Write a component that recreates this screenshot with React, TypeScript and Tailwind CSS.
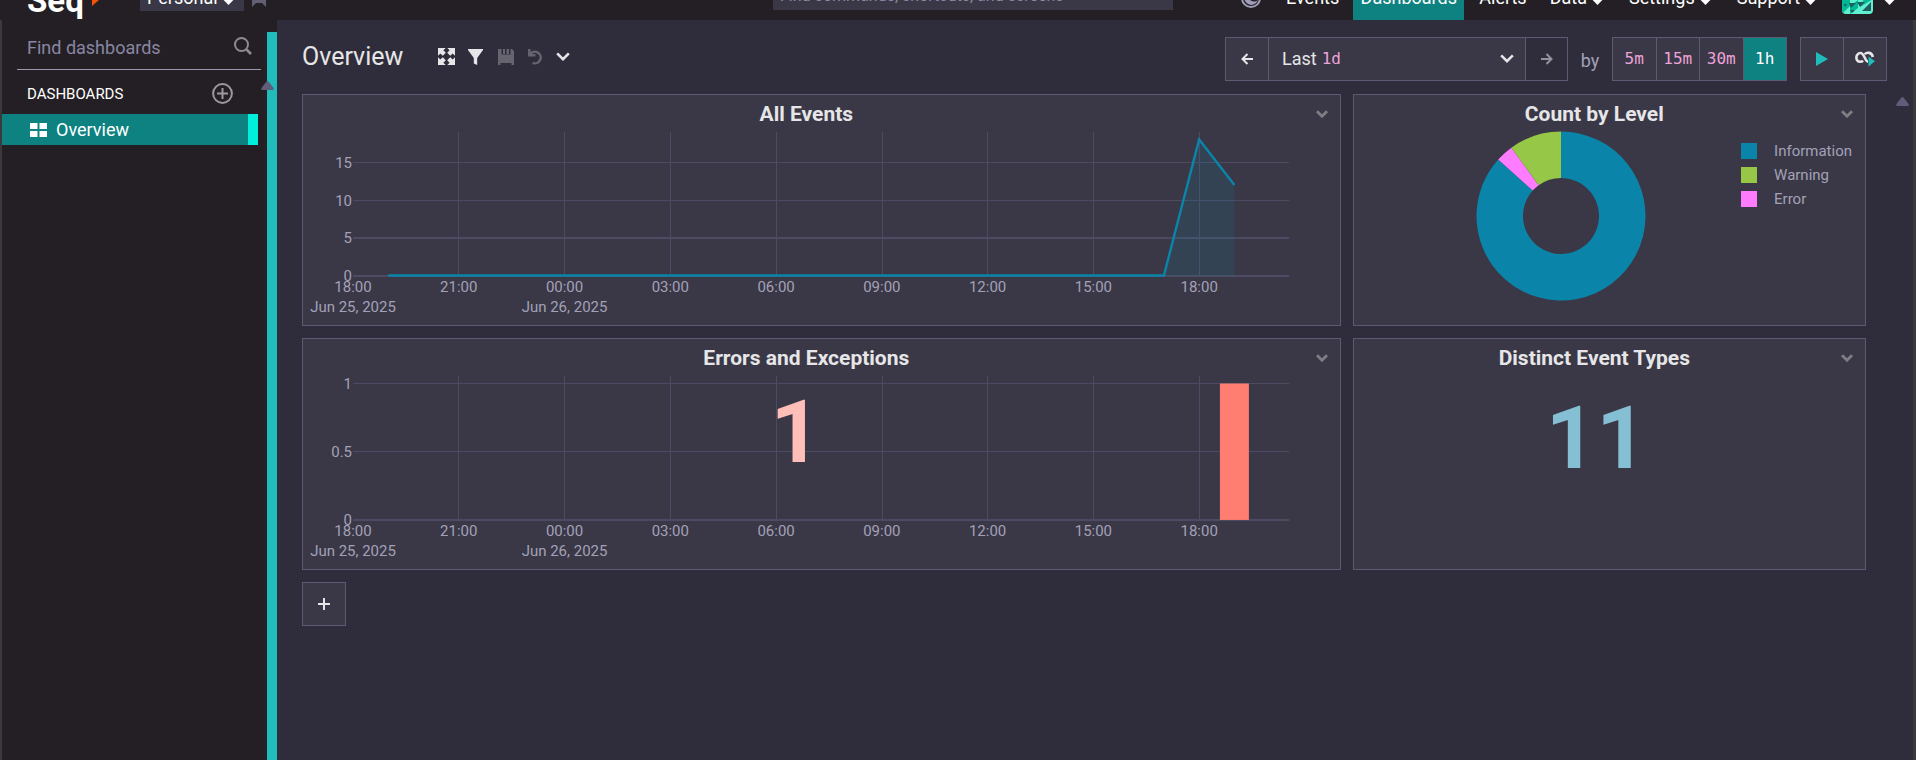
import type { ReactNode } from "react";

const HOURS = ["18:00", "21:00", "00:00", "03:00", "06:00", "09:00", "12:00", "15:00", "18:00"];
const DATES = ["Jun 25, 2025", "", "Jun 26, 2025"];
const PLOT_LEFT = 50;
const PLOT_RIGHT = 986;
const HOUR_WIDTH = 35.27;
const hourX = (hours: number) => PLOT_LEFT + hours * HOUR_WIDTH;

function Chevron({ className, width = 11, stroke = 2.4 }: { className?: string; width?: number; stroke?: number }) {
  return (
    <svg className={className} width={width} height={(width * 8) / 12} viewBox="0 0 12 8" fill="none" stroke="currentColor" strokeWidth={stroke} aria-hidden="true">
      <path d="M1 1.2 6 6.2 11 1.2" />
    </svg>
  );
}

function ScrollArrow() {
  return (
    <svg width="13" height="9" viewBox="0 0 13 9" fill="#5f5d78" aria-hidden="true">
      <path d="M5.3.8Q6.5-.6 7.7.8L12.6 7Q13.2 9 11.6 9H1.4Q-.2 9 .4 7Z" />
    </svg>
  );
}

function Arrow({ back }: { back?: boolean }) {
  return (
    <svg width="12" height="12" viewBox="0 0 12 12" fill="none" stroke="currentColor" strokeWidth="2" aria-hidden="true">
      {back ? <path d="M12 6H1.5M6.5 1 1.5 6 6.5 11" /> : <path d="M0 6H10.5M5.5 1 10.5 6 5.5 11" />}
    </svg>
  );
}

function MenuChevron() {
  return <Chevron className="mt-[6px]" width={11} stroke={3.4} />;
}

function Header() {
  const item = "flex h-full items-center gap-[5px] text-[18px] leading-6";
  return (
    <header className="flex h-5 items-end overflow-hidden bg-[#241f24]">
      <div className="flex h-11 w-full items-center">
        <div className="flex h-full min-w-0 flex-1 items-center pl-[27px]">
          <a href="#home" className="flex w-[113px] items-center gap-2 pt-[6px] text-[33px] leading-8 font-bold text-white">
            Seq
            <svg width="7" height="16" viewBox="0 0 7 16" fill="#f4510b" aria-hidden="true"><path d="M0 0H7V7L0 13Z" /></svg>
          </a>
          <button type="button" aria-haspopup="menu" className="flex h-[26px] w-[104px] items-center justify-between bg-[#3a3846] pr-[10px] pl-[7px] text-[18px] leading-6 text-white">
            Personal
            <MenuChevron />
          </button>
          <button type="button" aria-label="Bookmarks" className="ml-2">
            <svg width="14" height="17" viewBox="0 0 14 17" fill="#625f72"><path d="M0 0H14V17L10 13H4L0 17Z" /></svg>
          </button>
        </div>
        <div className="mb-[10px] flex h-7 w-[400px] items-center self-end bg-[#3a3846] pr-[9px] pl-[7px]">
          <input aria-label="Find commands, shortcuts, and screens" placeholder="Find commands, shortcuts, and screens" className="h-6 min-w-0 flex-1 bg-transparent text-[16px] leading-6 outline-none placeholder:text-[#8c8aa8]" />
          <kbd className="font-['DejaVu_Sans_Mono',monospace] text-[13px] leading-6 text-[#e88a6f]">Ctrl K</kbd>
        </div>
        <nav className="flex h-full w-[743px] shrink-0 items-center pl-[68px] text-white">
          <button type="button" aria-label="Theme" className="mr-[25px] text-[#a09db8]">
            <svg width="20" height="20" viewBox="0 0 20 20" fill="none">
              <circle cx="10" cy="10" r="9" stroke="currentColor" strokeWidth="2" />
              <path d="M9 3A7 7 0 1 0 17 12 6 6 0 0 1 9 3Z" fill="currentColor" />
            </svg>
          </button>
          <a href="#events" className={item}>Events</a>
          <a href="#dashboards" aria-current="page" className="ml-[14px] flex h-full w-[111px] items-center justify-center bg-[#0e8280] text-[18px] leading-6">Dashboards</a>
          <a href="#alerts" className={item + " ml-[15px]"}>Alerts</a>
          <button type="button" className={item + " ml-[23px]"}>Data<MenuChevron /></button>
          <button type="button" className={item + " ml-[26px]"}>Settings<MenuChevron /></button>
          <button type="button" className={item + " ml-[26px]"}>Support<MenuChevron /></button>
          <button type="button" aria-label="Account" className="ml-[26px] flex items-center gap-[11px]">
            <svg className="rounded-sm" width="31" height="32" viewBox="0 0 31 32">
              <rect width="31" height="32" fill="#5ff0d0" />
              <path d="M0 17H8V24L0 32ZM8 24 16 18V26L8 32ZM22 17H31L18 25Z" fill="#00b894" />
              <path d="M7 21H14L9 26ZM15 20H23L18 25ZM20 29 29 20V29ZM8 28H13L10 31ZM2 22H5L3 25Z" fill="#215c61" />
            </svg>
            <MenuChevron />
          </button>
        </nav>
      </div>
    </header>
  );
}

function Sidebar() {
  return (
    <aside className="relative w-[267px] shrink-0 border-l-2 border-[#3a3a3a] bg-[#241f24] pt-[6px]">
      <form className="mr-[6px] ml-[15px] flex h-11 items-center border-b border-[#9a98ad] pr-[9px] pl-[10px]">
        <input aria-label="Find dashboards" placeholder="Find dashboards" className="min-w-0 flex-1 bg-transparent text-[18px] leading-6 text-white outline-none placeholder:text-[#8886a3]" />
        <button type="submit" aria-label="Search" className="pb-1">
          <svg width="18" height="18" viewBox="0 0 18 18" fill="none" stroke="#8d8b90" strokeWidth="2"><circle cx="7.5" cy="7.5" r="6.5" /><path d="M12.5 12.5 17 17" strokeWidth="2.6" /></svg>
        </button>
      </form>
      <div className="flex h-11 items-center justify-between pt-[3px] pr-[34px] pl-[25px]">
        <h2 className="text-[15px] leading-6 text-white">DASHBOARDS</h2>
        <button type="button" aria-label="New dashboard">
          <svg width="21" height="21" viewBox="0 0 21 21" fill="none" stroke="#9b999e" strokeWidth="2"><circle cx="10.5" cy="10.5" r="9.4" /><path d="M10.5 5V16M5 10.5H16" /></svg>
        </button>
      </div>
      <a href="#overview" aria-current="page" className="mr-[9px] flex h-[31px] items-center gap-[9px] border-r-10 border-[#00efdd] bg-[#0e8280] pl-7 text-[18px] leading-6 text-white">
        <svg width="17" height="14" viewBox="0 0 17 14" fill="#fff" aria-hidden="true"><path d="M0 0H7.5V6H0ZM9.5 0H17V6H9.5ZM0 8H7.5V14H0ZM9.5 8H17V14H9.5Z" /></svg>
        Overview
      </a>
      <div className="absolute top-[61px] -right-[7px] z-10"><ScrollArrow /></div>
    </aside>
  );
}

function Toolbar() {
  const cell = "flex-1 border-r border-[#5c5a75] last:border-r-0";
  return (
    <div className="flex min-h-11 flex-wrap items-center pr-[26px] pl-[25px]">
      <div className="flex items-center pb-[5px] text-[#e6e6e8]">
        <h1 className="mr-[35px] text-[25px] leading-8">Overview</h1>
        <button type="button" aria-label="Full screen" className="mr-[13px]">
          <svg width="17" height="17" viewBox="0 0 17 17" fill="currentColor">
            <path d="M0 0H7.7L5.4 2.3 7.8 4.8 4.8 7.8 2.3 5.4 0 7.7ZM17 0V7.7L14.7 5.4 12.2 7.8 9.2 4.8 11.6 2.3 9.3 0ZM0 17V9.3L2.3 11.6 4.8 9.2 7.8 12.2 5.4 14.7 7.7 17ZM17 17H9.3L11.6 14.7 9.2 12.2 12.2 9.2 14.7 11.6 17 9.3Z" />
          </svg>
        </button>
        <button type="button" aria-label="Filter" className="mr-[15px]">
          <svg width="15" height="16" viewBox="0 0 15 16" fill="currentColor"><path d="M0 0H15V1L9.2 9V16L5.8 14.5V9L0 1Z" /></svg>
        </button>
        <button type="button" aria-label="Save" disabled className="mr-[14px] text-[#66646f]">
          <svg width="16" height="16" viewBox="0 0 16 16" fill="currentColor"><path d="M0 0H3.5V6.5H12.5V0H14L16 2V16H13.5V13.5H2.5V16H0ZM5 0H7V5H5ZM8.5 0H11V5H8.5ZM0 5.5H16V14H0Z" /></svg>
        </button>
        <button type="button" aria-label="Undo" disabled className="mr-[13px] text-[#66646f]">
          <svg width="15" height="16" viewBox="0 0 15 16" fill="none" stroke="currentColor" strokeWidth="2.5"><path d="M1.3 0V6.2H7.5M1.8 5.6A5.8 5.8 0 1 1 4.6 13.8" /></svg>
        </button>
        <button type="button" aria-label="More"><Chevron width={14} stroke={2.2} /></button>
      </div>
      <div className="ml-auto flex h-11 items-center">
        <div className="flex h-11 w-[343px] border border-[#5c5a75] bg-[#3a3846] text-[#e6e6e8]">
          <button type="button" aria-label="Previous" className="flex w-[43px] items-center justify-center border-r border-[#5c5a75]"><Arrow back /></button>
          <div className="relative flex min-w-0 flex-1 items-center pl-[13px] text-[18px] leading-6">
            <label htmlFor="range">Last</label>
            <select id="range" className="h-full min-w-0 flex-1 appearance-none bg-transparent pl-[5px] font-['DejaVu_Sans_Mono',monospace] text-[16px] text-[#eda3d8] outline-none">
              <option>1d</option>
            </select>
            <Chevron className="pointer-events-none absolute right-[11px]" width={14} stroke={2.2} />
          </div>
          <button type="button" aria-label="Next" disabled className="flex w-[42px] items-center justify-center border-l border-[#5c5a75] bg-[#2f2d3b] text-[#94929c]"><Arrow /></button>
        </div>
        <span className="w-[44px] pt-1 text-center text-[18px] leading-6 text-[#a3a1b8]">by</span>
        <div className="flex h-11 w-[175px] border border-[#5c5a75] bg-[#3a3846] font-['DejaVu_Sans_Mono',monospace] text-[16px] text-[#eda3d8]">
          <button type="button" className={cell}>5m</button>
          <button type="button" className={cell}>15m</button>
          <button type="button" className={cell}>30m</button>
          <button type="button" aria-pressed="true" className="flex-1 bg-[#0e8280] text-white">1h</button>
        </div>
        <div className="ml-[13px] flex h-11 w-[87px] border border-[#5c5a75] bg-[#3a3846]">
          <button type="button" aria-label="Refresh" className="flex flex-1 items-center justify-center border-r border-[#5c5a75]">
            <svg width="12" height="14" viewBox="0 0 12 14" fill="#20bcbb"><path d="M0 0 12 7 0 14Z" /></svg>
          </button>
          <button type="button" aria-label="Auto refresh" className="flex flex-1 items-center justify-center">
            <svg width="20" height="16" viewBox="0 0 20 16" fill="none">
              <path d="M8 9.6C6.8 11 3.2 11.4 1.9 8.8.4 5.4 2.6 2 5.4 2 9.6 2 9.8 10.6 13 10.6M9.8 3.2C11.4 1.2 17 .8 17.8 6" stroke="#e6e6e8" strokeWidth="2.6" />
              <path d="M13.5 5.5 20 10.3 13.5 15.5Z" fill="#20bcbb" />
            </svg>
          </button>
        </div>
      </div>
    </div>
  );
}

function Card({ title, className = "", children }: { title: string; className?: string; children: ReactNode }) {
  return (
    <section className={"flex flex-col border border-[#5c5a75] bg-[#3a3846] " + className}>
      <div className="flex h-9 items-center pt-[2px] pr-3">
        <h2 className="flex-1 text-center text-[21px] leading-6 font-bold text-[#e6e6e8]">{title}</h2>
        <button type="button" aria-label={title + " menu"} className="flex w-[18px] justify-end text-[#807e84]"><Chevron width={12} stroke={2.8} /></button>
      </div>
      {children}
    </section>
  );
}

type Tick = { label: string; y: number; thick?: boolean };

function TimeChart({ label, ticks, children }: { label: string; ticks: Tick[]; children: ReactNode }) {
  const base = ticks[ticks.length - 1].y;
  return (
    <svg role="img" aria-label={label} viewBox="0 0 1037 194" className="h-auto w-full" fontSize="15" fill="#a3a1b8">
      {ticks.map((t) => (
        <g key={t.label}>
          <rect x={PLOT_LEFT} y={t.y} width={PLOT_RIGHT - PLOT_LEFT} height={t.thick ? 2 : 1} fill="#4d4b63" shapeRendering="crispEdges" />
          <text x={PLOT_LEFT - 1} y={t.y + 6} textAnchor="end">{t.label}</text>
        </g>
      ))}
      {HOURS.map((h, i) => (
        <g key={i}>
          {i > 0 && <rect x={Math.floor(hourX(i * 3))} y="1" width={1} height={base - 1} fill="#4d4b63" shapeRendering="crispEdges" />}
          <text x={hourX(i * 3)} y={base + 17} textAnchor="middle">{h}</text>
          {DATES[i] && <text x={hourX(i * 3)} y={base + 37} textAnchor="middle">{DATES[i]}</text>}
        </g>
      ))}
      {children}
    </svg>
  );
}

const LEVELS = [
  { name: "Information", count: 26, color: "#0b84aa" },
  { name: "Error", count: 1, color: "#ff7cff" },
  { name: "Warning", count: 3, color: "#97c746" },
];
const LEGEND = [LEVELS[0], LEVELS[2], LEVELS[1]];

function Donut() {
  const outer = 84.5;
  const inner = 38;
  const total = 30;
  const point = (r: number, n: number) => {
    const a = (n / total) * 2 * Math.PI;
    return `${85 + r * Math.sin(a)} ${85 - r * Math.cos(a)}`;
  };
  let start = 0;
  return (
    <svg role="img" aria-label="Count by Level" width="170" height="170" viewBox="0 0 170 170">
      {LEVELS.map((l) => {
        const from = start;
        const to = (start += l.count);
        const large = l.count > total / 2 ? 1 : 0;
        return <path key={l.name} fill={l.color} d={`M${point(outer, from)}A${outer} ${outer} 0 ${large} 1 ${point(outer, to)}L${point(inner, to)}A${inner} ${inner} 0 ${large} 0 ${point(inner, from)}Z`} />;
      })}
    </svg>
  );
}

export default function App() {
  return (
    <div className="flex min-h-screen flex-col bg-[#241f24] font-['Roboto',sans-serif]">
      <Header />
      <div className="flex flex-1">
        <Sidebar />
        <div className="mt-3 w-[10px] shrink-0 bg-[#20bcbb]" />
        <main className="flex min-w-0 flex-1 flex-col border-r-3 border-[#3a3a3a] bg-[#2f2d3b] pt-[17px]">
          <Toolbar />
          <div className="mt-[13px] flex items-start pr-[4px] pl-[25px]">
            <div className="grid min-w-0 flex-1 grid-cols-12 gap-3">
              <Card title="All Events" className="col-span-8">
                <TimeChart label="All Events" ticks={[{ label: "15", y: 31 }, { label: "10", y: 69 }, { label: "5", y: 106, thick: true }, { label: "0", y: 144, thick: true }]}>
                  <path d={`M${hourX(23)} 145 L${hourX(24)} 8.5 L${hourX(25)} 54 V145Z`} fill="#0b84aa" fillOpacity="0.15" />
                  <path d={`M${hourX(1)} 144.5 H${hourX(23)} L${hourX(24)} 8.5 L${hourX(25)} 54`} fill="none" stroke="#0b84aa" strokeWidth="2.4" />
                </TimeChart>
              </Card>
              <Card title="Count by Level" className="col-span-4">
                <div className="flex flex-1 justify-between pr-[13px]">
                  <div className="flex flex-1 justify-center pl-[27px]"><Donut /></div>
                  <ul className="pt-2 text-[15px] leading-6 text-[#a3a1b8]">
                    {LEGEND.map((l) => (
                      <li key={l.name} className="flex items-center gap-[17px]">
                        <span className="size-4" style={{ backgroundColor: l.color }} />
                        {l.name}
                      </li>
                    ))}
                  </ul>
                </div>
              </Card>
              <Card title="Errors and Exceptions" className="col-span-8">
                <TimeChart label="Errors and Exceptions" ticks={[{ label: "1", y: 8 }, { label: "0.5", y: 76 }, { label: "0", y: 144, thick: true }]}>
                  <rect x={hourX(25) - 14.5} y="8.5" width="29" height="136.5" fill="#ff7d71" />
                  <text x="493" y="87" textAnchor="middle" fontSize="88" fontWeight="700" fill="#ffbeb8">1</text>
                </TimeChart>
              </Card>
              <Card title="Distinct Event Types" className="col-span-4">
                <p className="mt-[6px] pr-[26px] text-center text-[88px] leading-[114px] font-bold text-[#85bfd3]">11</p>
              </Card>
              <div className="col-span-12">
                <button type="button" aria-label="Add chart" className="flex size-11 items-center justify-center border border-[#5c5a75] bg-[#3a3846] text-[#e6e6e8]">
                  <svg width="12" height="12" viewBox="0 0 12 12" stroke="currentColor" strokeWidth="2"><path d="M6 0V12M0 6H12" /></svg>
                </button>
              </div>
            </div>
            <div className="shrink-0 pt-[3px] pl-[30px]"><ScrollArrow /></div>
          </div>
        </main>
      </div>
    </div>
  );
}
